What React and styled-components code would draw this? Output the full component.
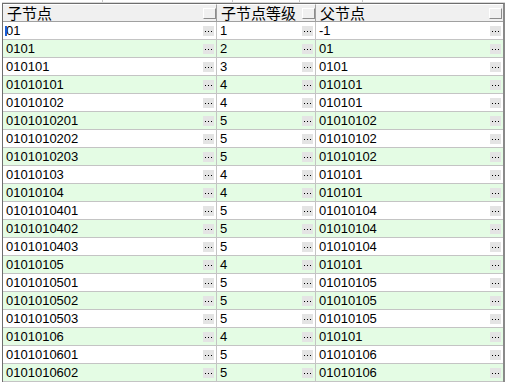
import React from "react"
import styled, { createGlobalStyle } from "styled-components"

const GlobalStyle = createGlobalStyle`
  html, body {
    margin: 0;
    padding: 0;
    background: #ffffff;
  }
`

const rows = [
  ["01", "1", "-1"],
  ["0101", "2", "01"],
  ["010101", "3", "0101"],
  ["01010101", "4", "010101"],
  ["01010102", "4", "010101"],
  ["0101010201", "5", "01010102"],
  ["0101010202", "5", "01010102"],
  ["0101010203", "5", "01010102"],
  ["01010103", "4", "010101"],
  ["01010104", "4", "010101"],
  ["0101010401", "5", "01010104"],
  ["0101010402", "5", "01010104"],
  ["0101010403", "5", "01010104"],
  ["01010105", "4", "010101"],
  ["0101010501", "5", "01010105"],
  ["0101010502", "5", "01010105"],
  ["0101010503", "5", "01010105"],
  ["01010106", "4", "010101"],
  ["0101010601", "5", "01010106"],
  ["0101010602", "5", "01010106"],
]

const headers = ["子节点", "子节点等级", "父节点"]

const Frame = styled.div`
  width: 505px;
  height: 382px;
  overflow: hidden;
  display: flex;
  flex-direction: column;
  background: #ffffff;
`

const TopStrip = styled.div`
  height: 2px;
  margin-left: 2px;
  border-bottom: 1px solid #d8d8d8;
  display: grid;
  grid-template-columns: 101px 130px 67px 63px 1fr;
`

const Tick = styled.div`
  border-right: 1px solid #c8c8c8;
`

const Table = styled.div`
  margin-left: 2px;
  border-left: 1px solid #6e6e6e;
  border-right: 2px solid #8a8a8a;
  border-top: 1px solid #6e6e6e;
  display: grid;
  grid-template-columns: 214px 99px 187px;
  grid-auto-rows: 18px;
  flex: 1;
`

const HeaderCell = styled.div`
  display: flex;
  align-items: center;
  justify-content: space-between;
  background: #f0f0f0;
  border-top: 1px solid #ffffff;
  border-bottom: 1px solid #a0a0a0;
  border-right: ${p => (p.$last ? "none" : "1px solid #a0a0a0")};
  padding-left: 4px;
  font-family: "Noto Sans CJK SC", "DejaVu Sans", sans-serif;
  font-size: 15px;
  line-height: 16px;
  color: #000000;
  box-sizing: border-box;
  height: 18px;
`

const HeaderButton = styled.div`
  flex-shrink: 0;
  width: 13px;
  height: 11px;
  box-sizing: border-box;
  background: #f0f0f0;
  border-top: 1px solid #ffffff;
  border-left: 1px solid #ffffff;
  border-right: 1px solid #8c8c8c;
  border-bottom: 1px solid #8c8c8c;
  margin-right: ${p => (p.$last ? "1px" : "0")};
`

const Cell = styled.div`
  position: relative;
  display: flex;
  align-items: center;
  justify-content: space-between;
  background: ${p => (p.$alt ? "#e4fce4" : "#ffffff")};
  border-bottom: 1px solid #c4c4c4;
  border-right: ${p => (p.$last ? "none" : "1px solid #c4c4c4")};
  padding-left: 3px;
  font-family: "Liberation Sans", Arial, sans-serif;
  font-size: 13px;
  color: #000000;
  box-sizing: border-box;
  height: 18px;
`

const CellText = styled.span`
  line-height: 17px;
`

const Caret = styled.span`
  position: absolute;
  left: 2px;
  top: 4px;
  width: 2px;
  height: 10px;
  background: #1a5fd6;
`

const DotsButton = styled.div`
  flex-shrink: 0;
  width: 11px;
  height: 10px;
  margin-right: 2px;
  background: #e4e4e4;
  display: flex;
  align-items: center;
  justify-content: center;
  gap: 2px;
  padding-top: 1px;
  box-sizing: border-box;
`

const Dot = styled.span`
  width: 1px;
  height: 1px;
  background: #000000;
`

const Dots = () => (
  <DotsButton>
    <Dot />
    <Dot />
    <Dot />
  </DotsButton>
)

export default function App() {
  return (
    <Frame>
      <GlobalStyle />
      <TopStrip>
        <Tick />
        <Tick />
        <Tick />
        <Tick />
        <div />
      </TopStrip>
      <Table>
        {headers.map((h, i) => (
          <HeaderCell key={h} $last={i === 2}>
            <span>{h}</span>
            <HeaderButton $last={i === 2} />
          </HeaderCell>
        ))}
        {rows.map((r, ri) =>
          r.map((v, ci) => (
            <Cell key={ri + "-" + ci} $alt={ri % 2 === 1} $last={ci === 2}>
              {ri === 0 && ci === 0 && <Caret />}
              <CellText>{v}</CellText>
              <Dots />
            </Cell>
          ))
        )}
      </Table>
    </Frame>
  )
}
